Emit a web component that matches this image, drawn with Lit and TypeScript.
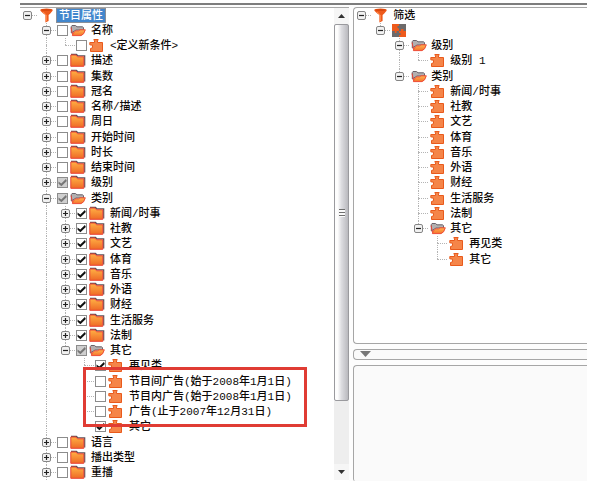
import { LitElement, html, svg, css, nothing } from "lit";
import { customElement, property, state } from "lit/decorators.js";
import { classMap } from "lit/directives/class-map.js";

type IconName = "funnel" | "folder" | "piece" | "group";
type Check = "off" | "on" | "mixed";

interface TreeNode {
  text: string;
  icon: IconName;
  check?: Check;
  open?: boolean;
  selected?: boolean;
  expandable?: boolean;
  continues?: boolean;
  children?: TreeNode[];
}

interface Row {
  node: TreeNode;
  guides: boolean[];
  last: boolean;
}

const closed = (text: string, check: Check = "off"): TreeNode => ({
  text,
  icon: "folder",
  check,
  expandable: true,
});
const piece = (text: string, check?: Check): TreeNode => ({ text, icon: "piece", check });

const KINDS = ["新闻/时事", "社教", "文艺", "体育", "音乐", "外语", "财经", "生活服务", "法制"];

const ATTRIBUTES: TreeNode = {
  text: "节目属性",
  icon: "funnel",
  open: true,
  selected: true,
  children: [
    { text: "名称", icon: "folder", check: "off", open: true, children: [piece("<定义新条件>", "off")] },
    closed("描述"),
    closed("集数"),
    closed("冠名"),
    closed("名称/描述"),
    closed("周日"),
    closed("开始时间"),
    closed("时长"),
    closed("结束时间"),
    closed("级别", "mixed"),
    {
      text: "类别",
      icon: "folder",
      check: "mixed",
      open: true,
      children: [
        ...KINDS.map((k) => closed(k, "on")),
        {
          text: "其它",
          icon: "folder",
          check: "mixed",
          open: true,
          children: [
            piece("再见类", "on"),
            piece("节目间广告(始于2008年1月1日)", "off"),
            piece("节目内广告(始于2008年1月1日)", "off"),
            piece("广告(止于2007年12月31日)", "off"),
            piece("其它", "on"),
          ],
        },
      ],
    },
    closed("语言"),
    closed("播出类型"),
    { ...closed("重播"), continues: true },
  ],
};

const FILTER: TreeNode = {
  text: "筛选",
  icon: "funnel",
  open: true,
  children: [
    {
      text: "",
      icon: "group",
      open: true,
      children: [
        { text: "级别", icon: "folder", open: true, children: [piece("级别 1")] },
        {
          text: "类别",
          icon: "folder",
          open: true,
          children: [
            ...KINDS.map((k) => piece(k)),
            { text: "其它", icon: "folder", open: true, children: [piece("再见类"), piece("其它")] },
          ],
        },
      ],
    },
  ],
};

const funnel = svg`
  <path d="M1.2 2 Q1.2 0.4 7.5 0.4 Q13.8 0.4 13.8 2 Q13.4 3.6 9.6 7 V13 L6.4 14.6 V7 Q1.6 3.6 1.2 2 Z" fill="#ee5a1c"/>
  <ellipse cx="7.5" cy="2" rx="5.2" ry="1" fill="#d9480f"/>
  <path d="M4 4 L7.4 7 V13" fill="none" stroke="#ff8a4c" stroke-width="1"/>`;

const folder = svg`
  <defs><linearGradient id="f" x1="0" y1="0" x2="0" y2="1">
    <stop offset="0" stop-color="#ffb044"/><stop offset="1" stop-color="#ee6a26"/></linearGradient></defs>
  <path d="M1 1.3 H6.5 L8 2.8 H14.7 V12.5" fill="none" stroke="#5c5054" stroke-width="1.2"/>
  <path d="M0.8 2 H6 L7.5 3.8 H13.8 V13.3 H0.8 Z" fill="url(#f)" stroke="#ea4336" stroke-width="1"/>`;

const folderOpen = svg`
  <defs><linearGradient id="o" x1="0" y1="0" x2="0" y2="1">
    <stop offset="0" stop-color="#ffb651"/><stop offset="1" stop-color="#f4722c"/></linearGradient></defs>
  <path d="M1.3 10 V3.5 L2 2.5 H5.5 L7 3.8 H12.5 L13.5 4.6 V7 H6 Z" fill="#b3afb0" stroke="#69626a" stroke-width="1"/>
  <path d="M1 4.5 L2.6 11.5" stroke="#ea4336" stroke-width="1"/>
  <path d="M5.8 7.8 Q9 8.4 10 6.8 H15.3 Q14 12 11 12.6 H2.4 Q2 10 5.8 7.8 Z" fill="url(#o)" stroke="#ee4a35" stroke-width="1"/>`;

const piecePath = svg`
  <path d="M5.5 4.5 V3 L4.8 1.5 H9.2 L8.5 3 V4.5 H13.5 V13.5 H1.5 V10.5 L3.5 9.8 V7.2 L0.8 6.8 V4.5 Z"
    fill="#f58549" stroke="#e95a1c" stroke-width="1"/>`;

const group = svg`
  <rect x="0" y="1" width="14" height="13" fill="#6d6a6b"/>
  <path d="M0 1 H7 V3 L5.5 3 V5 L7 5.5 V8 H4.5 V10 H2.8 V8 H0 Z" fill="#ee5a1c"/>
  <path d="M7 14 V12 H8.6 V10 H7 V8 H9 V6 H11.5 V8 H14 V14 Z" fill="#ee5a1c"/>`;

@customElement("filter-tree")
class FilterTree extends LitElement {
  @property({ attribute: false }) root!: TreeNode;
  @property() name = "";
  @state() private flipped = new Set<TreeNode>();

  static styles = css`
    :host {
      display: block;
      font: 500 11px/13px "Liberation Mono", "Noto Sans CJK SC", sans-serif;
      color: #0c0806;
    }
    .tree {
      list-style: none;
      margin: 0 0 0 -2px;
      padding: 0;
    }
    .row {
      display: flex;
      height: 15px;
      align-items: stretch;
      white-space: nowrap;
    }
    .row:nth-child(4n) {
      height: 16px;
    }
    .cell {
      flex: none;
      width: 19px;
      display: grid;
      grid-template-columns: 9px 1px 9px;
      grid-template-rows: 7px 1px 1fr;
    }
    .up {
      grid-area: 1 / 2;
      border-left: 1px dotted #b4b4b4;
    }
    .down {
      grid-area: 2 / 2 / 4 / 3;
      border-left: 1px dotted #b4b4b4;
    }
    .across {
      grid-area: 2 / 2 / 3 / 4;
      border-top: 1px dotted #b4b4b4;
    }
    .toggle {
      grid-area: 1 / 1 / 4 / 4;
      z-index: 1;
      place-self: start center;
      margin: 3px 0 0;
      padding: 0;
      border: 0;
      width: 9px;
      height: 9px;
      background: none;
    }
    .glyph {
      display: block;
      width: 9px;
      height: 9px;
    }
    .item {
      display: flex;
      align-items: center;
      height: 15px;
      padding-left: 2px;
      gap: 4px;
    }
    .item.checkable {
      padding-left: 1px;
      gap: 5px;
    }
    .box {
      appearance: none;
      flex: none;
      width: 11px;
      height: 11px;
      margin: 0 -3px 0 0;
      border: 1px solid #8c8c8c;
      background: #fff;
      display: grid;
      place-items: center;
    }
    .box:checked::before,
    .box.mixed::before {
      content: "";
      width: 9px;
      height: 8px;
      background: #111;
      clip-path: polygon(6% 38%, 36% 62%, 88% 6%, 98% 30%, 38% 96%, 6% 66%);
    }
    .box.mixed {
      background: #cfcfcf;
    }
    .box.mixed::before {
      background: #777;
    }
    .icon {
      flex: none;
      width: 16px;
      height: 15px;
    }
    .text {
      padding-top: 2px;
    }
    .text.selected {
      margin-left: -3px;
      padding: 2px 3px 0;
      background: #4387cd;
      box-shadow: inset 0 0 0 1px #8a8f98;
      color: #fff;
    }
  `;

  private isOpen(node: TreeNode) {
    return this.flipped.has(node) ? !node.open : !!node.open;
  }

  private flip(node: TreeNode) {
    const next = new Set(this.flipped);
    if (!next.delete(node)) next.add(node);
    this.flipped = next;
  }

  private rows(node: TreeNode, guides: boolean[], last: boolean, isRoot = false): Row[] {
    const own: Row = { node, guides, last };
    if (!this.isOpen(node) || !node.children) return [own];
    const inner = isRoot ? [false] : [...guides, !last];
    const kids = node.children;
    return [
      own,
      ...kids.flatMap((kid, i) => this.rows(kid, inner, i === kids.length - 1 && !kid.continues)),
    ];
  }

  private icon(node: TreeNode) {
    const art =
      node.icon === "funnel" ? funnel
      : node.icon === "piece" ? piecePath
      : node.icon === "group" ? group
      : this.isOpen(node) ? folderOpen
      : folder;
    return html`<svg class="icon" viewBox="0 0 16 15" aria-hidden="true">${art}</svg>`;
  }

  private toggle(node: TreeNode) {
    const open = this.isOpen(node);
    return html`<button
      class="toggle"
      aria-label=${open ? "折叠" : "展开"}
      aria-expanded=${open}
      @click=${() => this.flip(node)}
    >
      <svg class="glyph" viewBox="0 0 9 9" aria-hidden="true">
        <rect x="0.5" y="0.5" width="8" height="8" rx="1.5" fill="#f1f1f1" stroke="#858585" />
        <path d=${open ? "M2 4.5H7" : "M2 4.5H7M4.5 2V7"} stroke="#222" stroke-width="1.2" />
      </svg>
    </button>`;
  }

  private row({ node, guides, last }: Row) {
    const top = guides.length === 0;
    return html`<li class="row" role="treeitem" aria-level=${guides.length + 1}>
      ${guides.map(
        (on) => html`<span class="cell">${on ? html`<i class="up"></i><i class="down"></i>` : nothing}</span>`
      )}
      <span class="cell">
        ${top ? nothing : html`<i class="up"></i>`}
        ${last ? nothing : html`<i class="down"></i>`}
        <i class="across"></i>
        ${node.children || node.expandable ? this.toggle(node) : nothing}
      </span>
      <label class=${classMap({ item: true, checkable: !!node.check })}>
        ${node.check
          ? html`<input
              type="checkbox"
              class=${classMap({ box: true, mixed: node.check === "mixed" })}
              ?checked=${node.check === "on"}
              .indeterminate=${node.check === "mixed"}
            />`
          : nothing}
        ${this.icon(node)}
        ${node.text
          ? html`<span class=${classMap({ text: true, selected: !!node.selected })}>${node.text}</span>`
          : nothing}
      </label>
    </li>`;
  }

  render() {
    return html`<ul class="tree" role="tree" aria-label=${this.name}>
      ${this.rows(this.root, [], true, true).map((r) => this.row(r))}
    </ul>`;
  }
}

@customElement("app-root")
class AppRoot extends LitElement {
  static styles = css`
    :host {
      display: block;
      background: #fff;
    }
    .window {
      margin: 3px 13px 9px 20px;
      border-top: 2px solid #7d7d7d;
      padding-top: 2px;
      display: grid;
      grid-template-columns: 31fr 22fr;
      gap: 4px;
      background: #fdfdfd;
    }
    .source {
      display: flex;
      border-top: 1px solid #a8a8a8;
      padding-bottom: 1px;
      background: #fff;
    }
    .canvas {
      position: relative;
      flex: 1;
      min-width: 0;
    }
    .mark {
      position: absolute;
      left: 63px;
      top: 359px;
      width: 224px;
      height: 60px;
      box-sizing: border-box;
      border: 3px solid #e03c34;
      pointer-events: none;
    }
    .bar {
      flex: none;
      width: 15px;
      display: flex;
      flex-direction: column;
      background: #eeeeee;
    }
    .arrow {
      display: grid;
      place-items: center;
      height: 16px;
      padding: 0;
      border: 0;
      background: #f6f6f6;
    }
    .track {
      flex: 1;
      display: grid;
      grid-template-rows: 6fr 1fr;
    }
    .thumb {
      display: grid;
      place-items: center;
      border: 1px solid #9a9a9e;
      border-radius: 2px;
      background: linear-gradient(90deg, #fdfdfd 20%, #dcdce0 50%, #b9b9be);
    }
    .grip {
      width: 6px;
      height: 8px;
      background: repeating-linear-gradient(#6f6f6f 0 1px, #fafafa 1px 3px);
    }
    .side {
      display: grid;
      grid-template-rows: 26fr 11px 9fr;
      gap: 5px;
      min-width: 0;
    }
    .panel {
      box-sizing: border-box;
      border: 1px solid #a6a6a6;
      border-right: 0;
      border-radius: 4px 0 0 4px;
      background: #fff;
    }
    .splitter {
      display: flex;
      align-items: center;
      padding: 0 6px;
      background: #fafafa;
    }
    .detail {
      background: #fafafa;
      border-bottom: 0;
      border-bottom-left-radius: 2px;
    }
    .chevron {
      display: block;
    }
  `;

  render() {
    return html`<main class="window">
      <section class="source">
        <div class="canvas">
          <filter-tree .root=${ATTRIBUTES} name="节目属性"></filter-tree>
          <div class="mark"></div>
        </div>
        <div class="bar">
          <button class="arrow" aria-label="向上">
            <svg class="chevron" width="7" height="4" viewBox="0 0 7 4"><path d="M0 4L3.5 0L7 4Z" fill="#333" /></svg>
          </button>
          <div class="track"><div class="thumb"><span class="grip"></span></div></div>
          <button class="arrow" aria-label="向下">
            <svg class="chevron" width="7" height="4" viewBox="0 0 7 4"><path d="M0 0L3.5 4L7 0Z" fill="#333" /></svg>
          </button>
        </div>
      </section>
      <section class="side">
        <div class="panel"><filter-tree .root=${FILTER} name="筛选"></filter-tree></div>
        <button class="panel splitter" aria-label="详情">
          <svg class="chevron" width="11" height="6" viewBox="0 0 11 6"><path d="M0 0L5.5 6L11 0Z" fill="#777" /></svg>
        </button>
        <div class="panel detail"></div>
      </section>
    </main>`;
  }
}
